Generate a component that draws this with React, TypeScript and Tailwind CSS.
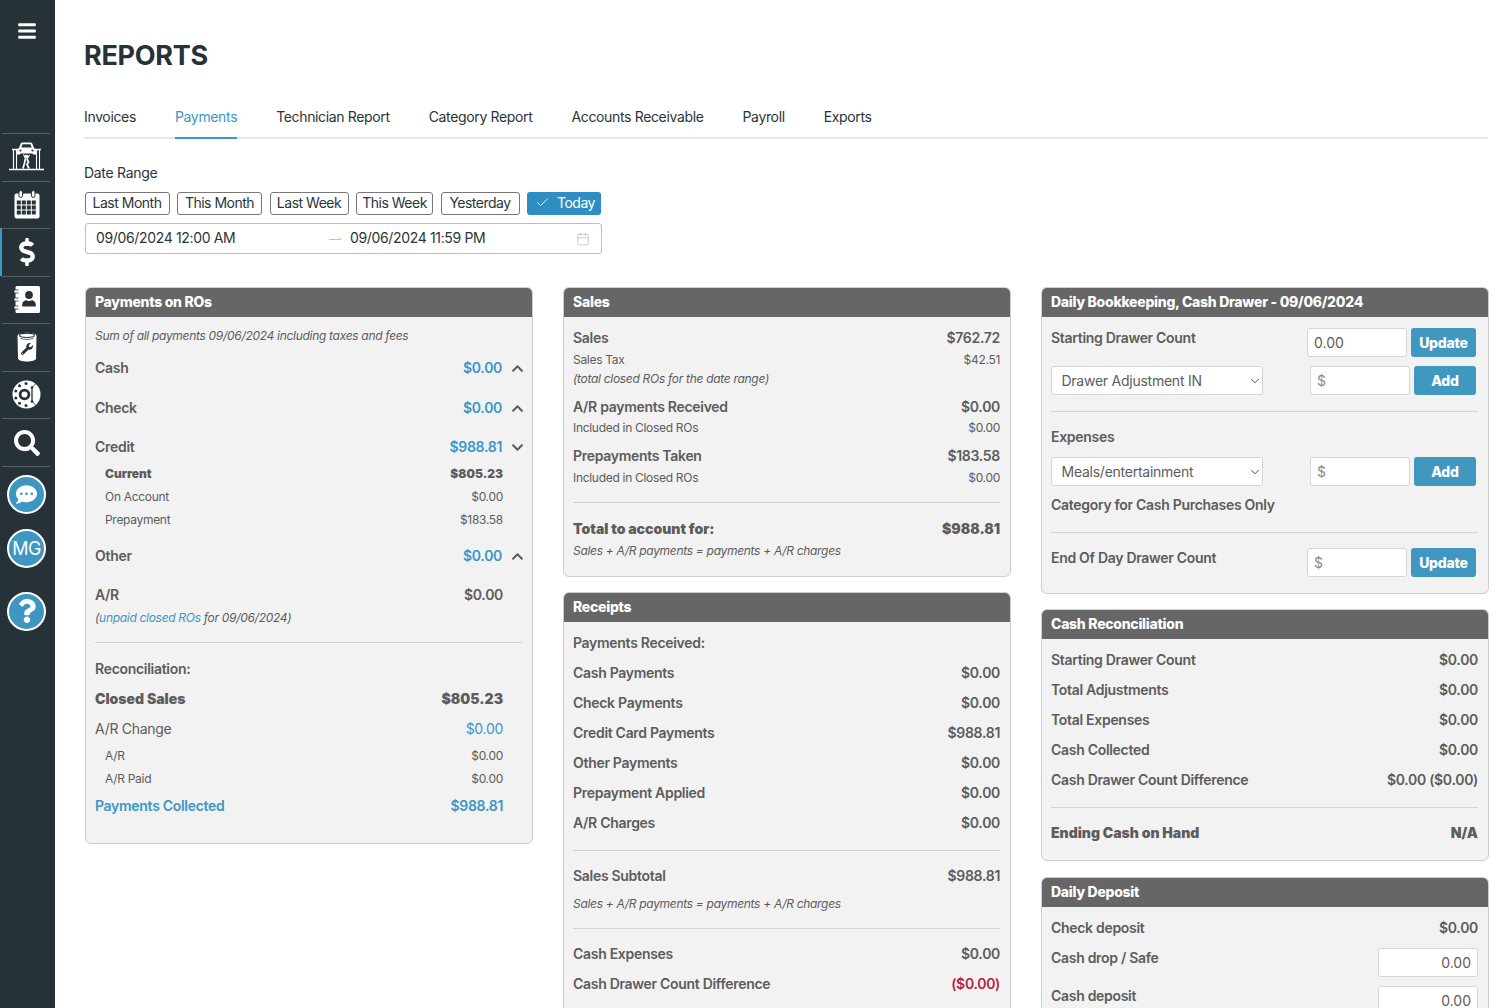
import React from "react";
import { FaBars, FaDollarSign, FaSearch, FaChevronUp, FaChevronDown, FaCommentDots, FaQuestion, FaWrench } from "react-icons/fa";
import { Check, Calendar, ChevronDown } from "lucide-react";

function LiftIcon() {
  return (
    <svg width="35" height="29" viewBox="0 0 35 29" fill="none" stroke="#fff">
      <path d="M0 27.500h35" strokeWidth="1.300" />
      <path d="M4.500 27V8M7.500 27V8M27.500 27V8M30.500 27V8" strokeWidth="1.100" />
      <path d="M3 7.500h6.500M25.500 7.500h6.500" strokeWidth="1.500" />
      <path d="M7.500 11h4M23.500 11h4" strokeWidth="1.200" />
      <path d="M8 9.500c0-2 1-3 2-3.500l1.500-4C12 .8 13 .5 14 .5h7c1 0 2 .3 2.500 1.500L25 6c1 .5 2 1.500 2 3.500v3h-3v-1H11v1H8z" fill="#fff" stroke="none" />
      <path d="M12.300 5.500l1.200-3.200h8l1.200 3.200z" fill="#263238" stroke="none" />
      <circle cx="11.500" cy="8.500" r="1.100" fill="#263238" stroke="none" />
      <circle cx="23.500" cy="8.500" r="1.100" fill="#263238" stroke="none" />
      <circle cx="17.500" cy="14.500" r="1.800" fill="#fff" stroke="none" />
      <path d="M16.500 16.500l-1 4.500-1.500 5.500M18 17l1.500 3-1.500 2.500 2 4" strokeWidth="1.700" />
      <path d="M16.500 16.500l-2-4M18 17l2.500-4" strokeWidth="1.200" />
    </svg>
  );
}

function CalendarIcon() {
  return (
    <svg width="26" height="29" viewBox="0 0 26 29">
      <rect x="0.500" y="3.500" width="25" height="25" rx="2" fill="#fff" />
      <rect x="5" y="0.500" width="3.500" height="7" rx="1.750" fill="#fff" stroke="#263238" strokeWidth="1" />
      <rect x="17.500" y="0.500" width="3.500" height="7" rx="1.750" fill="#fff" stroke="#263238" strokeWidth="1" />
      {[10.5, 15.5, 20.5].map((y) =>
        [2.8, 7.8, 12.8, 17.8].map((x) => <rect key={`${x}-${y}`} x={x} y={y} width="4" height="4" fill="#263238" />)
      )}
    </svg>
  );
}

function BookIcon() {
  return (
    <svg width="26" height="27" viewBox="0 0 26 27">
      <rect x="1.500" y="0" width="24.500" height="27" rx="1.500" fill="#fff" />
      {[4, 12, 20].map((y) => (
        <g key={y}>
          <path d={`M4.500 ${y}H1.200a1.500 1.500 0 000 3h3.300`} fill="#fff" stroke="#263238" strokeWidth="0.800" />
        </g>
      ))}
      <circle cx="15" cy="9" r="3.900" fill="#263238" />
      <path d="M8.200 20.500v-1.800c0-3 2.500-4.500 4-4.500 1 .6 1.800.8 2.800.8s1.800-.2 2.800-.8c1.500 0 4 1.500 4 4.500v1.800z" fill="#263238" />
    </svg>
  );
}

function OilIcon() {
  return (
    <svg width="20" height="31" viewBox="0 0 20 31">
      <path d="M0.500 5C0.500 .8 19.500 .8 19.500 5L19 27.500c-.2 4-17.800 4-18 0z" fill="#fff" />
      <ellipse cx="10" cy="4.300" rx="7.400" ry="2.200" fill="none" stroke="#263238" strokeWidth="1.100" />
      <path d="M3.500 7.200c3.500 1.700 9.500 1.700 13 0" fill="none" stroke="#263238" strokeWidth="0.700" />
      <FaWrench x="4" y="12" size="12" color="#263238" />
    </svg>
  );
}

function WheelIcon() {
  const pts = [[14, 3.600], [7.500, 5.800], [3.800, 11], [3.800, 18], [7.500, 23.200], [14, 25.400]];
  return (
    <svg width="29" height="29" viewBox="0 0 29 29">
      <circle cx="14.500" cy="14.500" r="14" fill="#fff" />
      <path d="M20 8v13" stroke="#263238" strokeWidth="1.300" />
      <path d="M20 7.500L24 3.500M20 21.500L24 25.500" stroke="#263238" strokeWidth="0.900" />
      <circle cx="20" cy="7.500" r="1.300" fill="#263238" />
      <circle cx="20" cy="21.500" r="1.300" fill="#263238" />
      <circle cx="12.500" cy="14.500" r="5.800" fill="#263238" />
      <circle cx="12.500" cy="14.500" r="3" fill="#fff" />
      {pts.map(([x, y]) => <circle key={`${x}-${y}`} cx={x} cy={y} r="1.500" fill="#263238" />)}
    </svg>
  );
}

function SideItem({ children, active }: { children: React.ReactNode; active?: boolean }) {
  return (
    <div className="relative h-[47.5px] pr-[2px] flex items-center justify-center">
      <div className="absolute top-0 left-[2px] w-[48px] h-px bg-[#5a5f62]" />
      {active && <div className="absolute left-0 top-0 bottom-0 w-[2px] bg-[#3e9ac4]" />}
      {children}
    </div>
  );
}

function Circle({ children, cls }: { children: React.ReactNode; cls?: string }) {
  return (
    <div className={`w-[39px] h-[39px] rounded-full border-2 border-white bg-[#3e97c0] text-white flex items-center justify-center ${cls ?? ""}`}>
      {children}
    </div>
  );
}

function Sidebar() {
  return (
    <aside className="w-[55px] shrink-0 h-[1008px] bg-[#263238] flex flex-col">
      <div className="h-[133px] pt-[21px] pr-[2px] flex justify-center shrink-0">
        <FaBars className="text-white text-[20px]" />
      </div>
      <SideItem><LiftIcon /></SideItem>
      <SideItem><CalendarIcon /></SideItem>
      <SideItem active><FaDollarSign className="text-white text-[28px]" /></SideItem>
      <SideItem><BookIcon /></SideItem>
      <SideItem><OilIcon /></SideItem>
      <SideItem><WheelIcon /></SideItem>
      <SideItem><FaSearch className="text-white text-[26px] mt-[2px]" /></SideItem>
      <div className="h-px w-[48px] ml-[2px] bg-[#5a5f62]" />
      <div className="flex flex-col items-center pr-[2px]">
        <Circle cls="mt-[8px]"><FaCommentDots className="text-[21px]" /></Circle>
        <Circle cls="mt-[15px] text-[18px] tracking-[-0.5px]">MG</Circle>
        <Circle cls="mt-[24px]"><FaQuestion className="text-[24px]" /></Circle>
      </div>
    </aside>
  );
}

const tabs = ["Invoices", "Payments", "Technician Report", "Category Report", "Accounts Receivable", "Payroll", "Exports"];
const ranges = [
  { t: "Last Month", w: "w-[85px]" },
  { t: "This Month", w: "w-[85px]" },
  { t: "Last Week", w: "w-[79px]" },
  { t: "This Week", w: "w-[77px]" },
  { t: "Yesterday", w: "w-[79px]" },
];

function Panel({ title, children, cls }: { title: string; children: React.ReactNode; cls?: string }) {
  return (
    <section className={`rounded-md border border-[#cdcdcd] bg-[#f2f2f2] overflow-hidden ${cls ?? ""}`}>
      <h2 className="h-[29px] pb-[2px] bg-[#666666] text-white text-[14px] font-extrabold tracking-[-0.27px] px-[9.5px] flex items-center">{title}</h2>
      <div className="px-[9.5px] text-[#5c5c5c]">{children}</div>
    </section>
  );
}

function Row({ label, value, cls, vcls, heavy }: { label: React.ReactNode; value?: React.ReactNode; cls?: string; vcls?: string; heavy?: boolean }) {
  return (
    <div className={`h-5 pb-[1px] flex items-center justify-between text-[14px] ${heavy ? "font-black tracking-[0px]" : "font-semibold tracking-[-0.3px]"} ${cls ?? ""}`}>
      <span>{label}</span>
      <span className={vcls}>{value}</span>
    </div>
  );
}

function Small({ label, value, cls, heavy }: { label: React.ReactNode; value?: React.ReactNode; cls?: string; heavy?: boolean }) {
  return (
    <div className={`h-4 flex items-center justify-between text-[12px] ${heavy ? "font-black tracking-[0px]" : "tracking-[-0.3px]"} ${cls ?? ""}`}>
      <span>{label}</span>
      <span>{value}</span>
    </div>
  );
}

function Toggle({ label, value, down, cls }: { label: string; value: string; down?: boolean; cls?: string }) {
  return (
    <div className={`h-5 pb-[1px] flex items-center text-[14px] font-semibold tracking-[-0.3px] ${cls ?? ""}`}>
      <span className="flex-1">{label}</span>
      <span className="text-[#3a97c7]">{value}</span>
      {down ? <FaChevronDown className="ml-[9px] mr-[-2px] w-[13px] h-[13px] mt-[2px]" /> : <FaChevronUp className="ml-[9px] mr-[-2px] w-[13px] h-[13px] mt-[2px]" />}
    </div>
  );
}

function Hr({ cls }: { cls: string }) {
  return <div className={`h-px bg-[#d2d2d2] ${cls}`} />;
}

function TextInput({ placeholder, value, cls }: { placeholder?: string; value?: string; cls?: string }) {
  return (
    <input
      readOnly
      placeholder={placeholder}
      value={value ?? ""}
      className={`h-[29px] w-[100px] rounded-[3px] border border-[#d5d5d5] bg-white px-[6px] text-[14px] text-[#5c5c5c] placeholder:text-[#8a8a8a] outline-none ${cls ?? ""}`}
    />
  );
}

function Btn({ children, cls }: { children: React.ReactNode; cls: string }) {
  return (
    <button className={`h-[29px] rounded-[3px] bg-[#4097bf] text-white text-[14px] font-extrabold tracking-[-0.2px] flex items-center justify-center ${cls}`}>
      {children}
    </button>
  );
}

function Sel({ value, options }: { value: string; options: string[] }) {
  return (
    <div className="relative w-[212px] h-[29px]">
      <select
        defaultValue={value}
        className="appearance-none h-[29px] w-[212px] rounded-[3px] border border-[#d5d5d5] bg-white pl-[9.5px] text-[14px] tracking-[-0.25px] text-[#5c5c5c] outline-none"
      >
        {options.map((o) => <option key={o}>{o}</option>)}
      </select>
      <ChevronDown size={14} strokeWidth={1.6} className="absolute right-[1px] top-[8px] text-[#444]" />
    </div>
  );
}

function PaymentsPanel() {
  return (
    <Panel title="Payments on ROs" cls="pb-[27px]">
      <Small label={<i>Sum of all payments 09/06/2024 including taxes and fees</i>} cls="mt-[11px]" />
      <Toggle label="Cash" value="$0.00" cls="mt-[14px]" />
      <Toggle label="Check" value="$0.00" cls="mt-5" />
      <Toggle label="Credit" value="$988.81" down cls="mt-[19px]" />
      <Small label="Current" value="$805.23" heavy cls="mt-[9px] pl-[10px] pr-[19px]" />
      <Small label="On Account" value="$0.00" cls="mt-[7px] pl-[10px] pr-[19px]" />
      <Small label="Prepayment" value="$183.58" cls="mt-[7px] pl-[10px] pr-[19px]" />
      <Toggle label="Other" value="$0.00" cls="mt-[18px]" />
      <Row label="A/R" value="$0.00" cls="mt-[19px] pr-[19px]" />
      <Small
        label={<i>(<span className="text-[#3a97c7]">unpaid closed ROs</span> for 09/06/2024)</i>}
        cls="mt-[5px]"
      />
      <Hr cls="mt-4" />
      <Row label="Reconciliation:" cls="mt-4" />
      <Row label="Closed Sales" value="$805.23" heavy cls="mt-[10px] pr-[19px]" />
      <Row label={<span className="font-normal">A/R Change</span>} value="$0.00" vcls="text-[#3a97c7] font-normal" cls="mt-[10px] pr-[19px]" />
      <Small label="A/R" value="$0.00" cls="mt-[9px] pl-[10px] pr-[19px]" />
      <Small label="A/R Paid" value="$0.00" cls="mt-[7px] pl-[10px] pr-[19px]" />
      <Row label="Payments Collected" value="$988.81" cls="mt-[9px] pr-[19px] text-[#3a97c7]" />
    </Panel>
  );
}

function MiddleColumn() {
  return (
    <div>
      <Panel title="Sales" cls="pb-[17px]">
        <Row label="Sales" value="$762.72" cls="mt-[11px]" />
        <Small label="Sales Tax" value="$42.51" cls="mt-1" />
        <Small label={<i>(total closed ROs for the date range)</i>} cls="mt-[3px]" />
        <Row label="A/R payments Received" value="$0.00" cls="mt-[10px]" />
        <Small label="Included in Closed ROs" value="$0.00" cls="mt-[3px]" />
        <Row label="Prepayments Taken" value="$183.58" cls="mt-[10px]" />
        <Small label="Included in Closed ROs" value="$0.00" cls="mt-1" />
        <Hr cls="mt-4" />
        <Row label="Total to account for:" value="$988.81" heavy cls="mt-4" />
        <Small label={<i>Sales + A/R payments = payments + A/R charges</i>} cls="mt-1" />
      </Panel>
      <Panel title="Receipts" cls="mt-[15px]">
        <Row label="Payments Received:" cls="mt-[11px]" />
        <Row label="Cash Payments" value="$0.00" cls="mt-[10px]" />
        <Row label="Check Payments" value="$0.00" cls="mt-[10px]" />
        <Row label="Credit Card Payments" value="$988.81" cls="mt-[10px]" />
        <Row label="Other Payments" value="$0.00" cls="mt-[10px]" />
        <Row label="Prepayment Applied" value="$0.00" cls="mt-[10px]" />
        <Row label="A/R Charges" value="$0.00" cls="mt-[10px]" />
        <Hr cls="mt-[17px]" />
        <Row label="Sales Subtotal" value="$988.81" cls="mt-[15px]" />
        <Small label={<i>Sales + A/R payments = payments + A/R charges</i>} cls="mt-[10px]" />
        <Hr cls="mt-4" />
        <Row label="Cash Expenses" value="$0.00" cls="mt-[15px]" />
        <Row label="Cash Drawer Count Difference" value="($0.00)" vcls="text-[#b3263f]" cls="mt-[10px]" />
        <div className="h-[40px]" />
      </Panel>
    </div>
  );
}

function Label({ children }: { children: React.ReactNode }) {
  return <span className="h-5 pb-[1px] flex items-center text-[14px] font-semibold tracking-[-0.3px]">{children}</span>;
}

function RightColumn() {
  return (
    <div>
      <Panel title="Daily Bookkeeping, Cash Drawer - 09/06/2024" cls="pb-[16px]">
        <div className="flex items-start mt-[11px]">
          <div className="flex-1"><Label>Starting Drawer Count</Label></div>
          <TextInput value="0.00" />
          <Btn cls="w-[65px] ml-1 mr-[2px]">Update</Btn>
        </div>
        <div className="flex items-start mt-[9px]">
          <Sel value="Drawer Adjustment IN" options={["Drawer Adjustment IN", "Drawer Adjustment OUT"]} />
          <TextInput placeholder="$" cls="ml-[47px]" />
          <Btn cls="w-[62px] ml-1 mr-[2px]">Add</Btn>
        </div>
        <Hr cls="mt-4" />
        <Row label="Expenses" cls="mt-[15px]" />
        <div className="flex items-start mt-[10px]">
          <Sel value="Meals/entertainment" options={["Meals/entertainment", "Supplies"]} />
          <TextInput placeholder="$" cls="ml-[47px]" />
          <Btn cls="w-[62px] ml-1 mr-[2px]">Add</Btn>
        </div>
        <Row label="Category for Cash Purchases Only" cls="mt-[9px]" />
        <Hr cls="mt-[17px]" />
        <div className="flex items-start mt-[15px]">
          <div className="flex-1"><Label>End Of Day Drawer Count</Label></div>
          <TextInput placeholder="$" />
          <Btn cls="w-[65px] ml-1 mr-[2px]">Update</Btn>
        </div>
      </Panel>
      <Panel title="Cash Reconciliation" cls="mt-[15px] pb-[17px]">
        <Row label="Starting Drawer Count" value="$0.00" cls="mt-[11px]" />
        <Row label="Total Adjustments" value="$0.00" cls="mt-[10px]" />
        <Row label="Total Expenses" value="$0.00" cls="mt-[10px]" />
        <Row label="Cash Collected" value="$0.00" cls="mt-[10px]" />
        <Row label="Cash Drawer Count Difference" value="$0.00 ($0.00)" cls="mt-[10px]" />
        <Hr cls="mt-[17px]" />
        <Row label="Ending Cash on Hand" value="N/A" heavy cls="mt-[15px]" />
      </Panel>
      <Panel title="Daily Deposit" cls="mt-4">
        <Row label="Check deposit" value="$0.00" cls="mt-[11px]" />
        <div className="flex items-start justify-between mt-[10px]">
          <Label>Cash drop / Safe</Label>
          <TextInput value="0.00" cls="text-right" />
        </div>
        <div className="flex items-start justify-between mt-[9px]">
          <Label>Cash deposit</Label>
          <TextInput value="0.00" cls="text-right" />
        </div>
        <div className="h-[30px]" />
      </Panel>
    </div>
  );
}

export default function App() {
  return (
    <div className="h-[1008px] w-[1500px] overflow-hidden flex bg-white [font-family:Inter,sans-serif] text-[#2b3439]">
      <Sidebar />
      <main className="flex-1 pl-[29px] pr-[12px] min-w-0">
        <h1 className="mt-[39px] h-[34px] flex items-center text-[27px] font-bold tracking-[-0.3px] text-[#263238]">REPORTS</h1>
        <nav className="mt-[28px] h-[38px] border-b-2 border-[#e6e6e6] flex gap-[39px] text-[14px] tracking-[-0.35px]">
          {tabs.map((t, i) => (
            <div key={t} className={`h-[38px] pt-[5px] ${i === 1 ? "text-[#3a97c7] border-b-2 border-[#3a97c7]" : ""}`}>{t}</div>
          ))}
        </nav>
        <div className="mt-[24px] h-5 pb-[2px] flex items-center text-[14px] tracking-[-0.3px]">Date Range</div>
        <div className="mt-[9px] ml-[0.5px] flex gap-[7.5px] tracking-[-0.5px]">
          {ranges.map((r) => (
            <button key={r.t} className={`h-[23px] pb-[2px] rounded-[3px] border border-[#777] text-[14px] flex items-center justify-center ${r.w}`}>{r.t}</button>
          ))}
          <button className="h-[23px] w-[74px] pb-[2px] rounded-[3px] bg-[#2e8dc3] text-white text-[14px] flex items-center pl-[8px] gap-[7px]">
            <Check size={15} strokeWidth={1.5} />Today
          </button>
        </div>
        <div className="mt-[8px] ml-[0.5px] pb-[2px] h-[31px] w-[517.5px] rounded-[3px] border border-[#bdbdbd] flex items-center text-[14px] tracking-[-0.35px] relative">
          <span className="ml-[10.5px] w-[233px]">09/06/2024 12:00 AM</span>
          <svg width="14" height="8" viewBox="0 0 14 8" className="mr-[7px]" fill="none" stroke="#c4c4c4"><path d="M0 5.500h12L9 2.500" /></svg>
          <span>09/06/2024 11:59 PM</span>
          <Calendar size={14} strokeWidth={1} className="absolute right-[11px] top-[8px] text-[#aaa]" />
        </div>
        <div className="mt-[33px] ml-[0.5px] grid grid-cols-[448px_448px_448px] gap-[30px]">
          <div><PaymentsPanel /></div>
          <MiddleColumn />
          <RightColumn />
        </div>
      </main>
    </div>
  );
}
